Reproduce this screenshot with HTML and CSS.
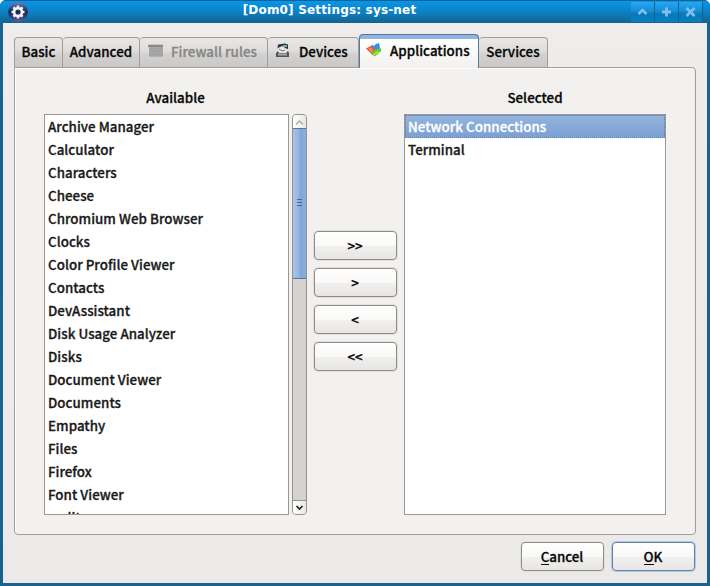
FILE: index.html
```html
<!DOCTYPE html>
<html lang="en">
<head>
<meta charset="utf-8">
<title>[Dom0] Settings: sys-net</title>
<link rel="stylesheet" href="styles.css">
</head>
<body>
<div class="window">
  <header class="titlebar">
    <svg class="gear" width="20" height="20" viewBox="0 0 20 20"><defs><linearGradient id="ball" x2="0" y2="1"><stop stop-color="#7180b1"/><stop offset=".5" stop-color="#172452"/><stop offset="1" stop-color="#536099"/></linearGradient></defs><circle cx="10" cy="10" r="9.8" fill="url(#ball)"/><circle cx="10" cy="10" r="3.900" fill="none" stroke="#f2f4f8" stroke-width="2.600"/><path d="M10 3.500v2.500M10 14v2.500M3.500 10h2.500M14 10h2.500M5.400 5.400l2 2M12.600 12.600l2 2M14.600 5.400l-2 2M5.400 14.600l2-2" stroke="#f2f4f8" stroke-width="2.400"/></svg>
    <h1 class="title">[Dom0] Settings: sys-net</h1>
    <div class="controls">
      <span class="control"><svg width="11" height="10" viewBox="0 0 11 10"><path d="M1.5 7l4-4 4 4" fill="none" stroke="#7cc1ec" stroke-width="2.6"/></svg></span>
      <span class="control"><svg width="11" height="10" viewBox="0 0 11 10"><path d="M5.5 .5v9M1 5h9" fill="none" stroke="#7cc1ec" stroke-width="2.8"/></svg></span>
      <span class="control"><svg width="11" height="10" viewBox="0 0 11 10"><path d="M1.5 1l8 8M9.5 1l-8 8" fill="none" stroke="#7cc1ec" stroke-width="2.8"/></svg></span>
    </div>
  </header>
  <main class="content">
    <nav class="tabs">
      <div class="tab basic">Basic</div>
      <div class="tab advanced">Advanced</div>
      <div class="tab firewall"><svg width="16" height="16" viewBox="0 0 16 16"><path d="M1 1.500h14v12H1z" fill="#acacac"/><path d="M0 2h15v2H0z" fill="#898989"/><path d="M1 6h14M1 8.500h14M1 11h14M1 13h14M4 4v2M9 4v2M13 4v2M3 6v2.500M7 6v2.500M12 6v2.500M5 8.500V11M10 8.500V11M3 11v2M8 11v2M13 11v2" stroke="#999" stroke-width=".6"/></svg><span>Firewall rules</span></div>
      <div class="tab devices"><svg width="16" height="16" viewBox="0 0 16 16"><path d="M3 1.500L10 .5l3 1v4L11 7H4L2.500 5z" fill="#303436"/><path d="M8 2h4v2H8z" fill="#7dabb4"/><path d="M3 5l4-2 5 3 1 4H2z" fill="#e8e8e8"/><path d="M4 6l3 2 3-1" fill="none" stroke="#555" stroke-width=".8"/><path d="M1 10l2-2 1 2h7l2-2 1 2v4H1z" fill="#555"/><path d="M3 10.500h9v2H3z" fill="#aaa"/></svg><span>Devices</span></div>
      <div class="tab applications active"><svg width="16" height="16" viewBox="0 0 16 16"><path d="M0 6.500L7 3l2 5-2 5.500z" fill="#e45332"/><path d="M2 6.500l4-1 1 4-2 1z" fill="#f38b59"/><path d="M5 3l3 1 2-2 3-1 1 5-3 3-3-2z" fill="#398fe4"/><path d="M5 11l6-4 4-1v3l-6 5.500z" fill="#60ca27"/><path d="M7 12l5-3 1 1-4 3z" fill="#b6ee33"/></svg><span>Applications</span></div>
      <div class="tab services">Services</div>
    </nav>
    <section class="panel">
      <div class="column available">
        <h2>Available</h2>
        <div class="scroll-area">
          <ul class="list">
            <li>Archive Manager</li><li>Calculator</li><li>Characters</li><li>Cheese</li><li>Chromium Web Browser</li><li>Clocks</li><li>Color Profile Viewer</li><li>Contacts</li><li>DevAssistant</li><li>Disk Usage Analyzer</li><li>Disks</li><li>Document Viewer</li><li>Documents</li><li>Empathy</li><li>Files</li><li>Firefox</li><li>Font Viewer</li><li>gedit</li>
          </ul>
          <div class="scrollbar">
            <div class="arrow up"><svg width="9" height="7" viewBox="0 0 9 7"><path d="M1 5.500L4.500 2 8 5.500" fill="none" stroke="#aaa" stroke-width="1.300"/></svg></div>
            <div class="thumb"><i></i><i></i><i></i></div>
            <div class="arrow down"><svg width="9" height="7" viewBox="0 0 9 7"><path d="M1.500 2l3 3 3-3" fill="none" stroke="#222" stroke-width="1.700"/></svg></div>
          </div>
        </div>
      </div>
      <div class="moves">
        <button>&gt;&gt;</button><button>&gt;</button><button>&lt;</button><button>&lt;&lt;</button>
      </div>
      <div class="column selected">
        <h2>Selected</h2>
        <ul class="list"><li class="current">Network Connections</li><li>Terminal</li></ul>
      </div>
    </section>
    <footer class="actions">
      <button><span class="key">C</span>ancel</button>
      <button class="default"><span class="key">O</span>K</button>
    </footer>
  </main>
</div>
</body>
</html>
```
FILE: styles.css
```css
* { box-sizing: border-box; }
body { margin: 0; background: #fff; font: 500 13.333px/22px "Noto Sans CJK SC", "Noto Sans", sans-serif; letter-spacing: .04px; color: #080808; -webkit-text-stroke: .3px currentColor; }
.window { width: 710px; height: 586px; padding: 0 3px 3px; background: #15638e; border-radius: 6px 6px 0 0; overflow: hidden; }
.titlebar { display: flex; height: 23px; margin: 0 -3px; padding: 0 7px 0 8px; border-top: 1px solid #12608d; background: linear-gradient(#0796ea, #0d80c4 50%, #13638f); }
.gear { width: 20px; height: 20px; margin-top: 1px; }
.title { flex: 1; margin: 0; text-align: center; color: #fff; font: bold 12px/18px "DejaVu Sans", sans-serif; letter-spacing: .18px; -webkit-text-stroke: 0; }
.controls { display: flex; margin-top: 1px; }
.control { display: flex; align-items: center; justify-content: center; width: 24px; height: 20px; border-right: 1px solid #126291; background: linear-gradient(#28a6f4, #168ed5 45%, #0878b9 60%, #087fbd); }
.content { height: 560px; padding: 11px 12px 0 11px; background: linear-gradient(#eeedec, #ebeae8); }
.tabs { display: flex; align-items: flex-end; height: 33px; }
.tab { display: flex; align-items: center; justify-content: center; height: 30px; padding-bottom: 1px; border: 1px solid #a09e9a; border-left-width: 0; border-bottom: 0; border-radius: 4px 4px 0 0; background: linear-gradient(#e8e7e5, #dedddb 45%, #d3d2d0 55%, #c9c8c6); white-space: nowrap; }
.tab svg { flex: none; margin-bottom: 2px; }
.basic { width: 49px; border-left-width: 1px; }
.advanced { width: 77px; }
.firewall { width: 128px; justify-content: flex-start; padding-left: 8px; gap: 7px; color: #878787; }
.devices { width: 91px; justify-content: flex-start; padding-left: 7px; gap: 8px; }
.applications { width: 120px; height: 34px; margin-bottom: -1px; justify-content: flex-start; padding-left: 6px; padding-bottom: 2px; gap: 8px; border: 1px solid #56779f; border-bottom: 0; background: linear-gradient(#90b4de 0 4px, #fff 4px, #f2f1ef); }
.services { width: 69px; }
.panel { display: flex; width: 682px; height: 468px; padding: 18px 29px 0; border: 1px solid #a09e9a; border-radius: 0 4px 4px 4px; background: #f2f1ef; box-shadow: inset 1px 1px #fff; }
.column h2 { height: 28px; margin: 0; font: inherit; line-height: 24px; text-align: center; }
.available { width: 263px; }
.scroll-area { display: flex; gap: 3px; }
.list { width: 245px; height: 401px; margin: 0; padding: 0; overflow: hidden; border: 1px solid #9b9893; background: #fff; color: #1a1a1a; list-style: none; }
.list li { height: 23px; padding-left: 3px; line-height: 24px; }
.scrollbar { display: flex; flex-direction: column; width: 15px; height: 401px; border: 1px solid #96938e; border-radius: 4px; background: #d4d3d1; overflow: hidden; }
.arrow { display: flex; align-items: center; justify-content: center; height: 14px; background: linear-gradient(90deg, #fff, #e8e7e5); }
.down { margin-top: auto; border-top: 1px solid #96938e; }
.thumb { display: flex; flex-direction: column; align-items: center; justify-content: center; gap: 2px; height: 151px; margin: -1px -1px 0; padding-bottom: 2px; border: 1px solid #55779f; background: linear-gradient(90deg, #a9c4e9, #93b4e0 48%, #82a6d7 52%, #89addc); }
.thumb i { width: 5px; height: 1px; background: #416697; }
.moves { display: flex; flex-direction: column; gap: 8px; width: 83px; margin: 145px 7px 0; }
button { width: 83px; height: 29px; padding: 1px 1px 0 0; border: 1px solid #8f8c87; border-radius: 4px; background: linear-gradient(#fff, #f9f9f8 50%, #f1f0ef 52%, #e7e6e4); box-shadow: 0 0 0 1px #e2e0dd; font: inherit; color: inherit; -webkit-text-stroke: inherit; }
.selected { width: 262px; }
.selected .list { width: 262px; }
.selected .list .current { height: 23px; border: 1px dotted #5d7da7; padding-left: 2px; line-height: 22px; background: linear-gradient(#94b4df, #7ba0d2); color: #fff; }
.actions { display: flex; justify-content: flex-end; gap: 8px; padding-top: 7px; }
.default { border-color: #6482aa; box-shadow: 0 0 0 1px #b3c8e4; }
.key { border-bottom: 1px solid #080808; display: inline-block; line-height: 15px; }
```
